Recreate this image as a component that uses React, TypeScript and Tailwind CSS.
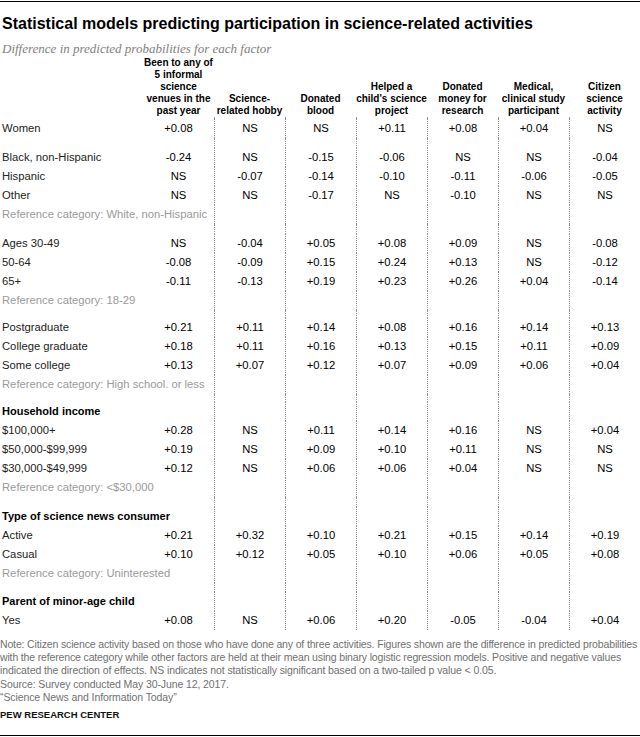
import React from "react";

type Row = { label: string; values: string[] };

type Block =
  | { kind: "row"; row: Row }
  | { kind: "ref"; text: string }
  | { kind: "heading"; text: string }
  | { kind: "gap"; h: string };

const columns = [
  ["Been to any of", "5 informal", "science", "venues in the", "past year"],
  ["Science-", "related hobby"],
  ["Donated", "blood"],
  ["Helped a", "child's science", "project"],
  ["Donated", "money for", "research"],
  ["Medical,", "clinical study", "participant"],
  ["Citizen", "science", "activity"],
];

const r = (label: string, values: string[]): Block => ({ kind: "row", row: { label, values } });

const blocks: Block[] = [
  { kind: "gap", h: "h-[2px]" },
  r("Women", ["+0.08", "NS", "NS", "+0.11", "+0.08", "+0.04", "NS"]),
  { kind: "gap", h: "h-[10px]" },
  r("Black, non-Hispanic", ["-0.24", "NS", "-0.15", "-0.06", "NS", "NS", "-0.04"]),
  r("Hispanic", ["NS", "-0.07", "-0.14", "-0.10", "-0.11", "-0.06", "-0.05"]),
  r("Other", ["NS", "NS", "-0.17", "NS", "-0.10", "NS", "NS"]),
  { kind: "ref", text: "Reference category: White, non-Hispanic" },
  { kind: "gap", h: "h-[10px]" },
  r("Ages 30-49", ["NS", "-0.04", "+0.05", "+0.08", "+0.09", "NS", "-0.08"]),
  r("50-64", ["-0.08", "-0.09", "+0.15", "+0.24", "+0.13", "NS", "-0.12"]),
  r("65+", ["-0.11", "-0.13", "+0.19", "+0.23", "+0.26", "+0.04", "-0.14"]),
  { kind: "ref", text: "Reference category: 18-29" },
  { kind: "gap", h: "h-[8px]" },
  r("Postgraduate", ["+0.21", "+0.11", "+0.14", "+0.08", "+0.16", "+0.14", "+0.13"]),
  r("College graduate", ["+0.18", "+0.11", "+0.16", "+0.13", "+0.15", "+0.11", "+0.09"]),
  r("Some college", ["+0.13", "+0.07", "+0.12", "+0.07", "+0.09", "+0.06", "+0.04"]),
  { kind: "ref", text: "Reference category: High school. or less" },
  { kind: "gap", h: "h-[8px]" },
  { kind: "heading", text: "Household income" },
  r("$100,000+", ["+0.28", "NS", "+0.11", "+0.14", "+0.16", "NS", "+0.04"]),
  r("$50,000-$99,999", ["+0.19", "NS", "+0.09", "+0.10", "+0.11", "NS", "NS"]),
  r("$30,000-$49,999", ["+0.12", "NS", "+0.06", "+0.06", "+0.04", "NS", "NS"]),
  { kind: "ref", text: "Reference category: <$30,000" },
  { kind: "gap", h: "h-[10px]" },
  { kind: "heading", text: "Type of science news consumer" },
  r("Active", ["+0.21", "+0.32", "+0.10", "+0.21", "+0.15", "+0.14", "+0.19"]),
  r("Casual", ["+0.10", "+0.12", "+0.05", "+0.10", "+0.06", "+0.05", "+0.08"]),
  { kind: "ref", text: "Reference category: Uninterested" },
  { kind: "gap", h: "h-[9px]" },
  { kind: "heading", text: "Parent of minor-age child" },
  r("Yes", ["+0.08", "NS", "+0.06", "+0.20", "-0.05", "-0.04", "+0.04"]),
];

const grid = "grid grid-cols-[143px_repeat(7,71px)]";
const sep = "border-l border-dotted border-[#8f8f8f]";

function Cells({ values, first, h }: { values: string[]; first: React.ReactNode; h: string }) {
  return (
    <div className={`${grid} ${h}`}>
      <div className="flex items-center pl-[2px] whitespace-nowrap">{first}</div>
      {values.map((v, i) => (
        <div
          key={i}
          className={`flex items-center justify-center text-black ${i > 0 ? sep : ""}`}
        >
          {v}
        </div>
      ))}
    </div>
  );
}

const empty = ["", "", "", "", "", "", ""];

export default function App() {
  return (
    <div
      className="w-[640px] h-[737px] bg-white pt-px overflow-hidden"
      style={{ fontFamily: '"Liberation Sans", Arial, sans-serif' }}
    >
      <div className="border-t border-black" />
      <h1 className="mt-[12px] pl-[2px] text-[16px] leading-[20px] font-bold text-black">
        Statistical models predicting participation in science-related activities
      </h1>
      <p className="mt-[7px] pl-[2px] text-[13px] leading-[16px] italic text-[#808080] font-['Liberation_Serif',serif]">
        Difference in predicted probabilities for each factor
      </p>

      <div className={`${grid} items-end`}>
        <div />
        {columns.map((lines, i) => (
          <div key={i} className="text-center text-[10px] leading-[12px] font-bold text-black">
            {lines.map((l, j) => (
              <div key={j} className="whitespace-nowrap">
                {l}
              </div>
            ))}
          </div>
        ))}
      </div>

      <div className="text-[11.25px] text-[#222]">
        {blocks.map((b, i) => {
          if (b.kind === "row")
            return <Cells key={i} h="h-[19px]" values={b.row.values} first={b.row.label} />;
          if (b.kind === "ref")
            return (
              <Cells
                key={i}
                h="h-[19px]"
                values={empty}
                first={<span className="text-[#9a9a9a]">{b.text}</span>}
              />
            );
          if (b.kind === "heading")
            return (
              <Cells
                key={i}
                h="h-[19px]"
                values={empty}
                first={<span className="font-bold text-black text-[11px]">{b.text}</span>}
              />
            );
          return <Cells key={i} h={b.h} values={empty} first={null} />;
        })}
      </div>

      <div className="mt-[8px] text-[10.5px] leading-[13px] text-[#707070] whitespace-nowrap">
        <div className="tracking-[-0.15px]">
          Note: Citizen science activity based on those who have done any of three activities. Figures shown are the difference in predicted probabilities
        </div>
        <div className="tracking-[-0.15px]">
          with the reference category while other factors are held at their mean using binary logistic regression models. Positive and negative values
        </div>
        <div className="tracking-[-0.1px]">
          indicated the direction of effects. NS indicates not statistically significant based on a two-tailed p value &lt; 0.05.
        </div>
        <div className="mt-[1px] tracking-[-0.1px]">Source: Survey conducted May 30-June 12, 2017.</div>
        <div className="tracking-[-0.1px]">“Science News and Information Today”</div>
        <div className="mt-[4px] text-[9.5px] font-bold text-[#111]">PEW RESEARCH CENTER</div>
        <div className="mt-[14px] border-t border-black" />
      </div>
    </div>
  );
}
